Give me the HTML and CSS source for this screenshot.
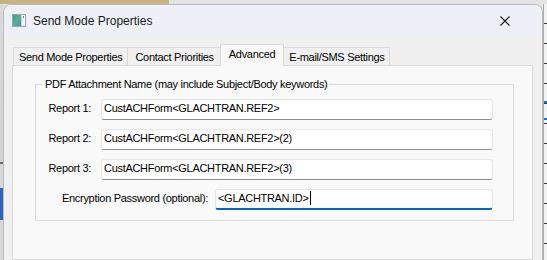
FILE: index.html
```html
<!DOCTYPE html>
<html lang="en">
<head>
  <meta charset="UTF-8">
  <meta name="viewport" content="width=device-width, initial-scale=1.0">
  <title>Send Mode Properties</title>
  <link rel="stylesheet" href="styles.css">
</head>
<body>
  <div class="desk">
    <div class="desk_top"><span class="desk_top_tan"></span></div>
    <div class="desk_mid">
      <div class="desk_left"></div>
      <div class="dialog">
        <div class="titlebar">
          <svg class="app_icon" width="14" height="13" viewBox="0 0 14 13">
            <defs>
              <linearGradient id="appFill" x1="0" y1="0" x2="1" y2="1">
                <stop offset="0" stop-color="#3c9a72"/>
                <stop offset="0.5" stop-color="#5fae9c"/>
                <stop offset="1" stop-color="#3f8fa6"/>
              </linearGradient>
            </defs>
            <rect x="0.5" y="0.5" width="13" height="12" fill="#f3f5f7" stroke="#9aa4ad"/>
            <rect x="1" y="1" width="8" height="11" fill="url(#appFill)"/>
            <rect x="9" y="1" width="1" height="11" fill="#c9d6dc"/>
            <rect x="11" y="2" width="1" height="2" fill="#7d8a94"/>
          </svg>
          <span class="title">Send Mode Properties</span>
          <svg class="close" width="10" height="10" viewBox="0 0 10 10">
            <path d="M0.5 0.5 L9.5 9.5 M9.5 0.5 L0.5 9.5" stroke="#1b1b1b" stroke-width="1.1" fill="none"/>
          </svg>
        </div>
        <div class="dialog_body">
          <div class="tabs">
            <div class="tab tab1">Send Mode Properties</div>
            <div class="tab tab2">Contact Priorities</div>
            <div class="tab tab3 on">Advanced</div>
            <div class="tab tab4">E-mail/SMS Settings</div>
          </div>
          <div class="panel">
            <fieldset class="group">
              <legend>PDF Attachment Name (may include Subject/Body keywords)</legend>
              <div class="row">
                <span class="label">Report 1:</span>
                <div class="field wide">CustACHForm&lt;GLACHTRAN.REF2&gt;</div>
              </div>
              <div class="row">
                <span class="label">Report 2:</span>
                <div class="field wide">CustACHForm&lt;GLACHTRAN.REF2&gt;(2)</div>
              </div>
              <div class="row">
                <span class="label">Report 3:</span>
                <div class="field wide">CustACHForm&lt;GLACHTRAN.REF2&gt;(3)</div>
              </div>
              <div class="row row_pass">
                <span class="label">Encryption Password (optional):</span>
                <div class="field short focus">&lt;GLACHTRAN.ID&gt;<span class="caret"></span></div>
              </div>
            </fieldset>
          </div>
        </div>
      </div>
      <div class="desk_right"></div>
    </div>
  </div>
</body>
</html>
```

FILE: styles.css
```css
body {
  margin: 0;
  width: 547px;
  height: 260px;
  overflow: hidden;
  background: #e3e3e3;
  font-family: 'Liberation Sans', Arial, sans-serif;
  font-size: 11px;
  letter-spacing: -0.3px;
  color: #000;
}

.desk {
  display: flex;
  flex-direction: column;
  height: 260px;
}
.desk_top {
  flex: none;
  height: 4px;
  background: #e4e4e4;
}
.desk_top_tan {
  display: block;
  width: 169px;
  height: 100%;
  background: #c9b37c;
}
.desk_mid {
  flex: 1;
  display: flex;
  min-height: 0;
}
.desk_left {
  width: 3px;
  background: linear-gradient(#dadada 0, #d2d2d2 158px, #6d6d6d 158px, #6d6d6d 160px, #d8d8d8 160px, #d8d8d8 184px, #2a63c4 184px, #2a63c4 216px, #d8d8d8 216px);
}
.desk_right {
  width: 3px;
  border-left: 1px solid #a9a9a9;
  background:
    linear-gradient(transparent 97px, #1f6fd0 97px, #1f6fd0 99px, transparent 99px, transparent 114px, #1f6fd0 114px, #1f6fd0 116px, transparent 116px),
    repeating-linear-gradient(#f2f2f2 0, #f2f2f2 19px, #3a3a3a 19px, #3a3a3a 20px);
}

.dialog {
  flex: 1;
  display: flex;
  flex-direction: column;
  background: #f0f0f0;
  border: 1px solid #bcbcbc;
  border-bottom: 0;
  border-radius: 8px 8px 0 0;
  overflow: hidden;
}

.titlebar {
  flex: none;
  height: 31px;
  display: flex;
  align-items: center;
  padding-left: 8px;
  background: #eef0f8;
}
.titlebar .app_icon {
  flex: none;
  margin-right: 7px;
}
.titlebar .title {
  font-size: 12px;
  letter-spacing: 0;
  color: #1a1a1a;
}
.titlebar .close {
  margin-left: auto;
  margin-right: 32px;
}

.dialog_body {
  flex: 1;
  display: flex;
  flex-direction: column;
  padding: 8px 9px 0 8px;
  min-height: 0;
}

.tabs {
  display: flex;
  align-items: flex-end;
  height: 21px;
  padding-left: 1px;
}
.tab {
  height: 18px;
  line-height: 18px;
  padding: 0 5px;
  box-sizing: border-box;
  border: 1px solid #d9d9d9;
  border-bottom: 0;
  background: #f0f0f0;
  white-space: nowrap;
}
.tab + .tab {border-left: 0;}
.tab2 {padding: 0 7px;}
.tab.on {
  position: relative;
  z-index: 1;
  height: 22px;
  line-height: 19px;
  margin: 0 -1px -1px -2px;
  padding: 0 8px;
  border-left: 1px solid #d9d9d9;
  background: #f9f9f9;
}
.tab4 {padding: 0 4px 0 6px;}

.panel {
  flex: 1;
  border: 1px solid #d9d9d9;
  background: #f9f9f9;
  padding: 12px 18px 0 22px;
}

.group {
  margin: 0;
  padding: 8px 20px 10px 0;
  border: 1px solid #dcdcdc;
  min-inline-size: 0;
}
.group legend {
  margin-left: 7px;
  padding: 0 2px;
  line-height: 13px;
}

.row {
  display: flex;
  justify-content: flex-end;
  align-items: baseline;
  gap: 10px;
}
.row + .row {margin-top: 9px;}
.row_pass {gap: 7px;}

.field {
  height: 21px;
  box-sizing: border-box;
  padding: 0 2px;
  line-height: 16px;
  background: #fff;
  border: 1px solid #e6e6e6;
  border-bottom-color: #8c8c8c;
  border-radius: 3px;
  white-space: nowrap;
  overflow: hidden;
}
.field.wide {width: 392px;}
.field.short {width: 278px;}
.field.focus {
  border-bottom: 2px solid #0067c0;
  padding-left: 2px;
}
.caret {
  display: inline-block;
  width: 1px;
  height: 14px;
  margin-left: 1px;
  vertical-align: -3px;
  background: #000;
}
```
